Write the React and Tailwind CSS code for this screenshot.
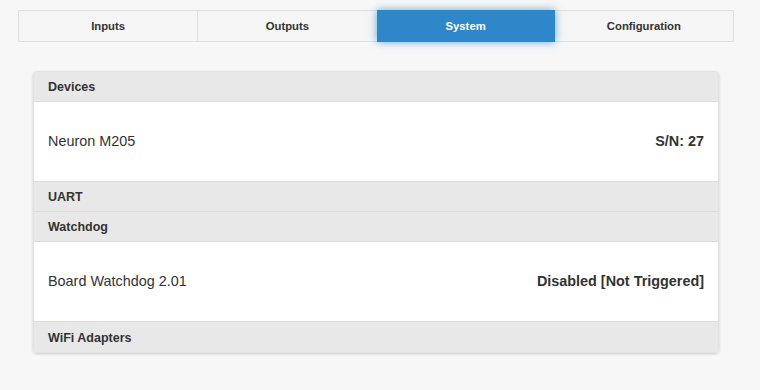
import React from "react";

const tabs = ["Inputs", "Outputs", "System", "Configuration"];

function Header({ children, last }) {
  return (
    <div
      className={`h-[30px] flex items-center px-[14px] pt-[2px] bg-[#e8e8e8] text-[12.5px] font-bold text-[#333] ${
        last ? "" : "border-b border-[#dcdcdc]"
      }`}
    >
      {children}
    </div>
  );
}

function Row({ name, value }) {
  return (
    <div className="h-[80px] flex items-center justify-between px-[14px] pt-px bg-white text-[14.4px] text-[#333] border-b border-[#dcdcdc]">
      <span>{name}</span>
      <span className="font-bold">{value}</span>
    </div>
  );
}

export default function App() {
  return (
    <div
      className="w-[760px] h-[390px] bg-[#f7f7f7] pt-[10px]"
      style={{ fontFamily: '"Liberation Sans", Arial, sans-serif' }}
    >
      {/* TABS */}
      <div className="ml-[18px] w-[716px] h-[32px] flex border border-[#e0e0e0] bg-[#f5f5f5]">
        {tabs.map((t, i) => (
          <div
            key={t}
            className={`flex-1 flex items-center justify-center text-[11.3px] font-bold ${
              t === "System"
                ? "bg-[#2d87c8] text-white shadow-[0_0_8px_rgba(45,135,200,0.7)] relative -my-px"
                : "text-[#333]"
            } ${i > 0 && t !== "System" && tabs[i - 1] !== "System" ? "border-l border-[#e0e0e0]" : ""}`}
          >
            {t}
          </div>
        ))}
      </div>

      {/* CARD */}
      <div className="mt-[29px] ml-[33px] w-[686px] rounded-[4px] overflow-hidden shadow-[0_1px_3px_rgba(0,0,0,0.18)] border border-[#e2e2e2]">
        <Header>Devices</Header>
        <Row name="Neuron M205" value="S/N: 27" />
        <Header>UART</Header>
        <Header>Watchdog</Header>
        <Row name="Board Watchdog 2.01" value="Disabled [Not Triggered]" />
        <Header last>WiFi Adapters</Header>
      </div>
    </div>
  );
}
